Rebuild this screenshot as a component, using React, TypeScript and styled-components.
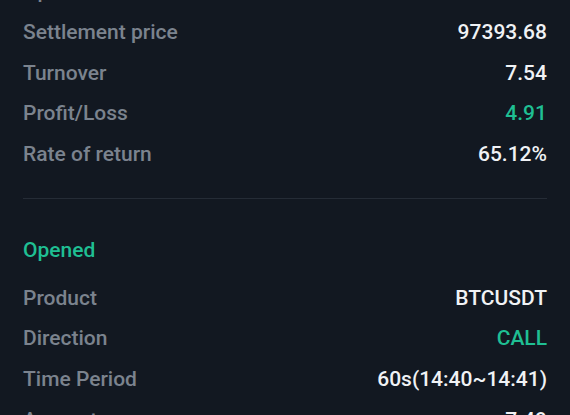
import React from "react";
import styled, { createGlobalStyle } from "styled-components";

const Global = createGlobalStyle`
  html, body {
    margin: 0;
    padding: 0;
    background: #121821;
    overflow: hidden;
  }
  body {
    font-family: Roboto, "Liberation Sans", Arial, sans-serif;
  }
`;

const Page = styled.div`
  width: 570px;
  height: 415px;
  overflow: hidden;
  background: #121821;
`;

const Scroller = styled.div`
  margin-top: -29px;
  padding: 0 23px;
`;

const Section = styled.div`
  display: flex;
  flex-direction: column;
`;

const Row = styled.div`
  height: 40.67px;
  display: flex;
  align-items: center;
  justify-content: space-between;
  font-size: 21px;
  font-weight: 500;
  white-space: nowrap;
`;

const Label = styled.span`
  color: #7b838e;
`;

const Value = styled.span<{ $tone?: "green" }>`
  color: ${(p) => (p.$tone === "green" ? "#1fbf93" : "#f0f2f5")};
  font-weight: 500;
`;

const Divider = styled.div`
  height: 1px;
  background: #252c36;
  margin: 23.5px 0 30.5px;
`;

const Title = styled.div`
  height: 40.67px;
  display: flex;
  align-items: center;
  font-size: 21px;
  font-weight: 500;
  color: #1fbf93;
  margin-bottom: 7.33px;
`;

type Item = { label: string; value: string; tone?: "green" };

const closed: Item[] = [
  { label: "Open time", value: "14:40:00" },
  { label: "Settlement price", value: "97393.68" },
  { label: "Turnover", value: "7.54" },
  { label: "Profit/Loss", value: "4.91", tone: "green" },
  { label: "Rate of return", value: "65.12%" },
];

const opened: Item[] = [
  { label: "Product", value: "BTCUSDT" },
  { label: "Direction", value: "CALL", tone: "green" },
  { label: "Time Period", value: "60s(14:40~14:41)" },
  { label: "Amount", value: "7.49" },
];

const Rows = ({ items }: { items: Item[] }) => (
  <>
    {items.map((it) => (
      <Row key={it.label}>
        <Label>{it.label}</Label>
        <Value $tone={it.tone}>{it.value}</Value>
      </Row>
    ))}
  </>
);

export default function App() {
  return (
    <Page>
      <Global />
      <Scroller>
        <Section>
          <Rows items={closed} />
        </Section>
        <Divider />
        <Section>
          <Title>Opened</Title>
          <Rows items={opened} />
        </Section>
      </Scroller>
    </Page>
  );
}
